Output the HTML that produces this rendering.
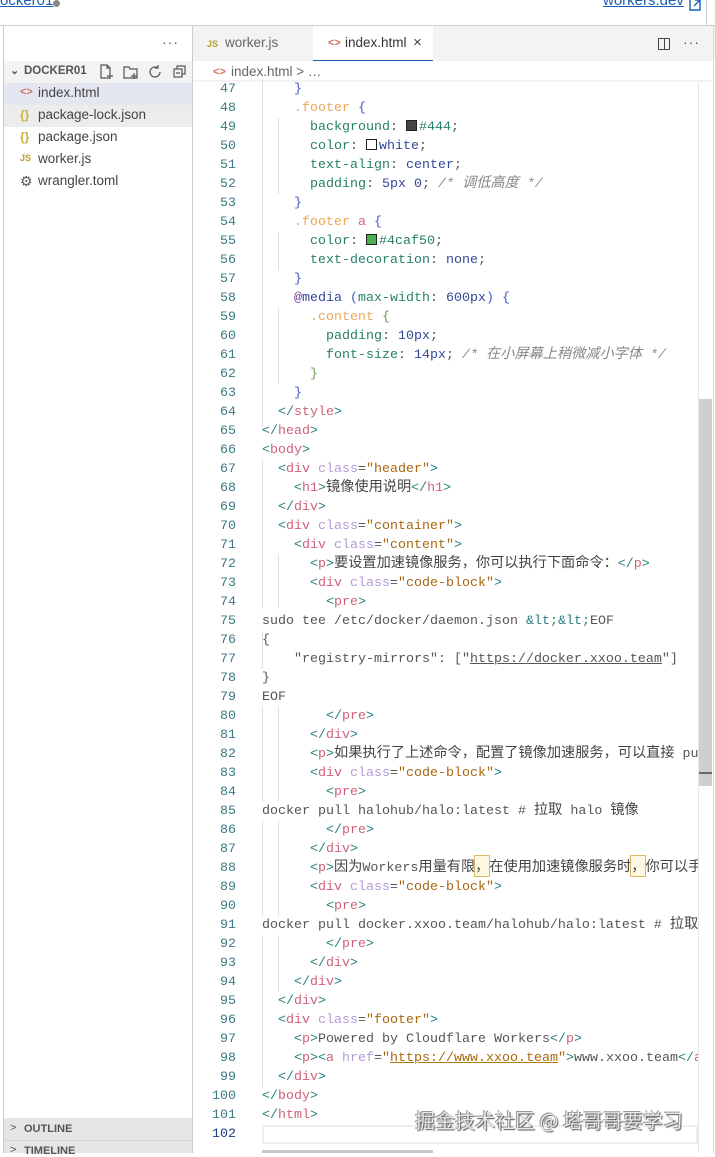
<!DOCTYPE html>
<html><head><meta charset="utf-8">
<style>
*{margin:0;padding:0;box-sizing:border-box}
body{width:715px;height:1153px;overflow:hidden;background:#fff;position:relative;font-family:"Liberation Sans","Noto Sans CJK SC",sans-serif;color:#444}
.abs{position:absolute}
.code{position:absolute;left:262px;white-space:pre;font-family:"Liberation Mono","Noto Sans CJK SC",monospace;font-size:13.33px;line-height:19px;height:19px;color:#555}
.ln{position:absolute;width:236px;text-align:right;font-family:"Liberation Mono",monospace;font-size:13.33px;line-height:19px;color:#3a7a84}
.c{font-family:"Noto Sans CJK SC",sans-serif;font-size:14.2px;line-height:14px;color:#444}
.b{color:#2b7d80}.t{color:#d0607a}.a{color:#b49ad8}.s{color:#a8680e}.p{color:#26806a}.v{color:#33489a}.sel{color:#eba85a}.br{color:#3b5cc4}.cm{color:#888;font-style:italic}
.u{text-decoration:underline;text-decoration-color:#555}
.us{text-decoration:underline;text-decoration-color:#b07a10}
.sw{display:inline-block;width:11px;height:11px;border:1px solid #222;vertical-align:-1px;margin-right:2px}
.guide{position:absolute;width:1px;background:#ddd}
.side{font-size:13.5px;color:#444}
.row{position:absolute;left:4px;width:188px;height:22px;line-height:22px}
</style></head><body>
<!-- top bar -->
<div class="abs" style="left:0;top:-8px;font-size:15px;color:#1a5fb4;text-decoration:underline">ocker01</div>
<div class="abs" style="left:53px;top:0;width:7px;height:7px;border-radius:50%;background:#888"></div>
<div class="abs" style="left:603px;top:-8px;font-size:15px;color:#1a5fb4;text-decoration:underline">workers.dev</div>
<svg class="abs" style="left:688px;top:0" width="14" height="12" fill="none" stroke="#1a5fb4" stroke-width="1.4"><path d="M2 0v10h10V4 M7 0h5v5 M12 0L6 6"/></svg>
<div class="abs" style="left:0;top:25px;width:715px;height:1px;background:#ccc"></div>
<div class="abs" style="left:706px;top:0;width:1px;height:25px;background:#ccc"></div>

<!-- sidebar -->
<div class="abs" style="left:3px;top:26px;width:1px;height:1127px;background:#ccc"></div>
<div class="abs" style="left:192px;top:26px;width:1px;height:1127px;background:#ccc"></div>
<div class="abs" style="left:162px;top:34px;font-size:14px;color:#555;letter-spacing:1px">···</div>
<div class="row" style="top:61px;background:#f3f3f3"></div>
<div class="abs side" style="left:10px;top:64px;font-size:11px;font-weight:bold;color:#555">&#8964;</div>
<div class="abs" style="left:24px;top:65px;font-size:11.5px;font-weight:bold;color:#555">DOCKER01</div>
<svg class="abs" style="left:98px;top:63px" width="90" height="18" fill="none" stroke="#555" stroke-width="1.2">
<path d="M3 2h6l3 3v10H3z M9 2v3h3 M9 13h6 M12 10v6"/>
<path d="M26 4h5l1 2h7v9H26z M33 13h6 M36 10v6"/>
<path d="M60 5a5 5 0 1 0 2 4 M60 2v3h-3"/>
<rect x="76" y="6" width="8" height="8"/><path d="M79 6V3h8v8h-3 M78 10h4"/>
</svg>
<div class="row" style="top:83px;background:#e4e6f1"></div>
<div class="row" style="top:105px;background:#ececec"></div>
<div class="abs side" style="left:20px;top:86px;color:#d0705a;font-size:11px;font-weight:bold">&lt;&gt;</div>
<div class="abs side" style="left:38px;top:85px">index.html</div>
<div class="abs side" style="left:20px;top:108px;color:#c8b040;font-size:12px;font-weight:bold">{}</div>
<div class="abs side" style="left:38px;top:107px">package-lock.json</div>
<div class="abs side" style="left:20px;top:130px;color:#c8b040;font-size:12px;font-weight:bold">{}</div>
<div class="abs side" style="left:38px;top:129px">package.json</div>
<div class="abs side" style="left:20px;top:153px;color:#b8a030;font-size:9px;font-weight:bold">JS</div>
<div class="abs side" style="left:38px;top:151px">worker.js</div>
<div class="abs side" style="left:20px;top:173px;color:#555;font-size:14px">&#9881;</div>
<div class="abs side" style="left:38px;top:173px">wrangler.toml</div>
<div class="abs" style="left:4px;top:1118px;width:188px;height:35px;background:#e5e5e5"></div>
<div class="abs" style="left:10px;top:1122px;font-size:11px;color:#555">&gt;</div>
<div class="abs" style="left:24px;top:1123px;font-size:11px;font-weight:bold;color:#555">OUTLINE</div>
<div class="abs" style="left:4px;top:1140px;width:188px;height:1px;background:#d5d5d5"></div>
<div class="abs" style="left:10px;top:1144px;font-size:11px;color:#555">&gt;</div>
<div class="abs" style="left:24px;top:1145px;font-size:11px;font-weight:bold;color:#555">TIMELINE</div>

<!-- tabs -->
<div class="abs" style="left:193px;top:26px;width:522px;height:35px;background:#f3f3f3"></div>
<div class="abs" style="left:207px;top:39px;font-size:9px;font-weight:bold;color:#b8a030">JS</div>
<div class="abs" style="left:225px;top:35px;font-size:13.5px;color:#666">worker.js</div>
<div class="abs" style="left:313px;top:26px;width:120px;height:35px;background:#fff;border-bottom:1.5px solid #1a5fb4"></div>
<div class="abs" style="left:328px;top:37px;font-size:11px;font-weight:bold;color:#d0705a">&lt;&gt;</div>
<div class="abs" style="left:345px;top:35px;font-size:13.5px;color:#333">index.html</div>
<div class="abs" style="left:413px;top:34px;font-size:15px;color:#444">×</div>
<div class="abs" style="left:658px;top:38px;width:12px;height:12px;border:1.3px solid #444;border-radius:1px"></div>
<div class="abs" style="left:664px;top:38px;width:1.3px;height:12px;background:#444"></div>
<div class="abs" style="left:683px;top:34px;font-size:14px;color:#555;letter-spacing:1px">···</div>
<div class="abs" style="left:213px;top:66px;font-size:11px;font-weight:bold;color:#d0705a">&lt;&gt;</div>
<div class="abs" style="left:231px;top:64px;font-size:13.5px;color:#666">index.html &gt; …</div>
<div class="abs" style="left:193px;top:80px;width:520px;height:3px;background:linear-gradient(#eee,#fff)"></div>

<!-- guides -->
<div class="guide" style="left:262px;top:80px;height:351px"></div>
<div class="guide" style="left:278px;top:118px;height:76px"></div>
<div class="guide" style="left:278px;top:232px;height:38px"></div>
<div class="guide" style="left:278px;top:308px;height:76px"></div>
<div class="guide" style="left:262px;top:460px;height:149px"></div>
<div class="guide" style="left:278px;top:555px;height:54px"></div>
<div class="guide" style="left:262px;top:631px;height:38px"></div>
<div class="guide" style="left:262px;top:707px;height:95px"></div>
<div class="guide" style="left:278px;top:707px;height:95px"></div>
<div class="guide" style="left:262px;top:821px;height:95px"></div>
<div class="guide" style="left:278px;top:821px;height:95px"></div>
<div class="guide" style="left:262px;top:935px;height:152px"></div>
<div class="guide" style="left:278px;top:935px;height:57px"></div>

<!-- line numbers -->
<div class="ln" style="top:80px">47<br>48<br>49<br>50<br>51<br>52<br>53<br>54<br>55<br>56<br>57<br>58<br>59<br>60<br>61<br>62<br>63<br>64<br>65<br>66<br>67<br>68<br>69<br>70<br>71<br>72<br>73<br>74<br>75<br>76<br>77<br>78<br>79<br>80<br>81<br>82<br>83<br>84<br>85<br>86<br>87<br>88<br>89<br>90<br>91<br>92<br>93<br>94<br>95<br>96<br>97<br>98<br>99<br>100<br>101<br><span style="color:#1a3a8a">102</span></div>

<!-- current line box -->
<div class="abs" style="left:262px;top:1125px;width:436px;height:19px;border:2px solid #eee"></div>

<div class="abs" style="left:262px;top:80px;width:436px;height:1073px;overflow:hidden">
<div style="position:relative;left:-262px">
<div class="code" style="top:0px"><span class="br">    }</span></div>
<div class="code" style="top:19px">    <span class="sel">.footer</span> <span class="br">{</span></div>
<div class="code" style="top:38px">      <span class="p">background</span>: <span class="sw" style="background:#444"></span><span class="p">#444</span>;</div>
<div class="code" style="top:57px">      <span class="p">color</span>: <span class="sw" style="background:#fff"></span><span class="v">white</span>;</div>
<div class="code" style="top:76px">      <span class="p">text-align</span>: <span class="v">center</span>;</div>
<div class="code" style="top:95px">      <span class="p">padding</span>: <span class="v">5px 0</span>; <span class="cm">/* <span class="c" style="color:#888">调低高度</span> */</span></div>
<div class="code" style="top:114px"><span class="br">    }</span></div>
<div class="code" style="top:133px">    <span class="sel">.footer</span> <span class="t">a</span> <span class="br">{</span></div>
<div class="code" style="top:152px">      <span class="p">color</span>: <span class="sw" style="background:#4caf50"></span><span class="p">#4caf50</span>;</div>
<div class="code" style="top:171px">      <span class="p">text-decoration</span>: <span class="v">none</span>;</div>
<div class="code" style="top:190px"><span class="br">    }</span></div>
<div class="code" style="top:209px">    <span style="color:#7a3f9a">@</span><span class="v">media</span> <span class="br">(</span><span class="p">max-width</span>: <span class="v">600px</span><span class="br">)</span> <span class="br">{</span></div>
<div class="code" style="top:228px">      <span class="sel">.content</span> <span style="color:#6a9a50">{</span></div>
<div class="code" style="top:247px">        <span class="p">padding</span>: <span class="v">10px</span>;</div>
<div class="code" style="top:266px">        <span class="p">font-size</span>: <span class="v">14px</span>; <span class="cm">/* <span class="c" style="color:#888">在小屏幕上稍微减小字体</span> */</span></div>
<div class="code" style="top:285px"><span style="color:#6a9a50">      }</span></div>
<div class="code" style="top:304px"><span class="br">    }</span></div>
<div class="code" style="top:323px">  <span class="b">&lt;/</span><span class="t">style</span><span class="b">&gt;</span></div>
<div class="code" style="top:342px"><span class="b">&lt;/</span><span class="t">head</span><span class="b">&gt;</span></div>
<div class="code" style="top:361px"><span class="b">&lt;</span><span class="t">body</span><span class="b">&gt;</span></div>
<div class="code" style="top:380px">  <span class="b">&lt;</span><span class="t">div</span> <span class="a">class</span>=<span class="s">"header"</span><span class="b">&gt;</span></div>
<div class="code" style="top:399px">    <span class="b">&lt;</span><span class="t">h1</span><span class="b">&gt;</span><span class="c">镜像使用说明</span><span class="b">&lt;/</span><span class="t">h1</span><span class="b">&gt;</span></div>
<div class="code" style="top:418px">  <span class="b">&lt;/</span><span class="t">div</span><span class="b">&gt;</span></div>
<div class="code" style="top:437px">  <span class="b">&lt;</span><span class="t">div</span> <span class="a">class</span>=<span class="s">"container"</span><span class="b">&gt;</span></div>
<div class="code" style="top:456px">    <span class="b">&lt;</span><span class="t">div</span> <span class="a">class</span>=<span class="s">"content"</span><span class="b">&gt;</span></div>
<div class="code" style="top:475px">      <span class="b">&lt;</span><span class="t">p</span><span class="b">&gt;</span><span class="c">要设置加速镜像服务，你可以执行下面命令：</span><span class="b">&lt;/</span><span class="t">p</span><span class="b">&gt;</span></div>
<div class="code" style="top:494px">      <span class="b">&lt;</span><span class="t">div</span> <span class="a">class</span>=<span class="s">"code-block"</span><span class="b">&gt;</span></div>
<div class="code" style="top:513px">        <span class="b">&lt;</span><span class="t">pre</span><span class="b">&gt;</span></div>
<div class="code" style="top:532px">sudo tee /etc/docker/daemon.json <span class="b">&amp;lt;&amp;lt;</span>EOF</div>
<div class="code" style="top:551px">{</div>
<div class="code" style="top:570px">    "registry-mirrors": ["<span class="u">https://docker.xxoo.team</span>"]</div>
<div class="code" style="top:589px">}</div>
<div class="code" style="top:608px">EOF</div>
<div class="code" style="top:627px">        <span class="b">&lt;/</span><span class="t">pre</span><span class="b">&gt;</span></div>
<div class="code" style="top:646px">      <span class="b">&lt;/</span><span class="t">div</span><span class="b">&gt;</span></div>
<div class="code" style="top:665px">      <span class="b">&lt;</span><span class="t">p</span><span class="b">&gt;</span><span class="c">如果执行了上述命令，配置了镜像加速服务，可以直接</span> pull</div>
<div class="code" style="top:684px">      <span class="b">&lt;</span><span class="t">div</span> <span class="a">class</span>=<span class="s">"code-block"</span><span class="b">&gt;</span></div>
<div class="code" style="top:703px">        <span class="b">&lt;</span><span class="t">pre</span><span class="b">&gt;</span></div>
<div class="code" style="top:722px">docker pull halohub/halo:latest # <span class="c">拉取</span> halo <span class="c">镜像</span></div>
<div class="code" style="top:741px">        <span class="b">&lt;/</span><span class="t">pre</span><span class="b">&gt;</span></div>
<div class="code" style="top:760px">      <span class="b">&lt;/</span><span class="t">div</span><span class="b">&gt;</span></div>
<div class="code" style="top:779px">      <span class="b">&lt;</span><span class="t">p</span><span class="b">&gt;</span><span class="c">因为</span>Workers<span class="c">用量有限<span style="outline:1px solid #d8b860;background:#fdf8e6">，</span>在使用加速镜像服务时<span style="outline:1px solid #d8b860;background:#fdf8e6">，</span>你可以手动</span></div>
<div class="code" style="top:798px">      <span class="b">&lt;</span><span class="t">div</span> <span class="a">class</span>=<span class="s">"code-block"</span><span class="b">&gt;</span></div>
<div class="code" style="top:817px">        <span class="b">&lt;</span><span class="t">pre</span><span class="b">&gt;</span></div>
<div class="code" style="top:836px">docker pull docker.xxoo.team/halohub/halo:latest # <span class="c">拉取</span> halo</div>
<div class="code" style="top:855px">        <span class="b">&lt;/</span><span class="t">pre</span><span class="b">&gt;</span></div>
<div class="code" style="top:874px">      <span class="b">&lt;/</span><span class="t">div</span><span class="b">&gt;</span></div>
<div class="code" style="top:893px">    <span class="b">&lt;/</span><span class="t">div</span><span class="b">&gt;</span></div>
<div class="code" style="top:912px">  <span class="b">&lt;/</span><span class="t">div</span><span class="b">&gt;</span></div>
<div class="code" style="top:931px">  <span class="b">&lt;</span><span class="t">div</span> <span class="a">class</span>=<span class="s">"footer"</span><span class="b">&gt;</span></div>
<div class="code" style="top:950px">    <span class="b">&lt;</span><span class="t">p</span><span class="b">&gt;</span>Powered by Cloudflare Workers<span class="b">&lt;/</span><span class="t">p</span><span class="b">&gt;</span></div>
<div class="code" style="top:969px">    <span class="b">&lt;</span><span class="t">p</span><span class="b">&gt;&lt;</span><span class="t">a</span> <span class="a">href</span>=<span class="s">"<span class="us">https://www.xxoo.team</span>"</span><span class="b">&gt;</span>www.xxoo.team<span class="b">&lt;/</span><span class="t">a</span><span class="b">&gt;&lt;</span></div>
<div class="code" style="top:988px">  <span class="b">&lt;/</span><span class="t">div</span><span class="b">&gt;</span></div>
<div class="code" style="top:1007px"><span class="b">&lt;/</span><span class="t">body</span><span class="b">&gt;</span></div>
<div class="code" style="top:1026px"><span class="b">&lt;/</span><span class="t">html</span><span class="b">&gt;</span></div>
</div></div>

<!-- scrollbars -->
<div class="abs" style="left:698px;top:83px;width:1px;height:1070px;background:#e6e6e6"></div>
<div class="abs" style="left:713px;top:26px;width:1px;height:1127px;background:#ddd"></div>
<div class="abs" style="left:699px;top:399px;width:13px;height:387px;background:#cfcfcf"></div>
<div class="abs" style="left:699px;top:772px;width:13px;height:2px;background:#666"></div>
<div class="abs" style="left:262px;top:1150px;width:171px;height:3px;background:#c8c8c8"></div>

<!-- watermark -->
<div class="abs" style="left:415px;top:1105px;font-family:'Noto Sans CJK SC',sans-serif;font-size:20px;color:#e8e8e8;text-shadow:1px 1px 1px #555,-1px -1px 0 #999;white-space:nowrap">掘金技术社区 @ 塔哥哥要学习</div>
</body></html>
